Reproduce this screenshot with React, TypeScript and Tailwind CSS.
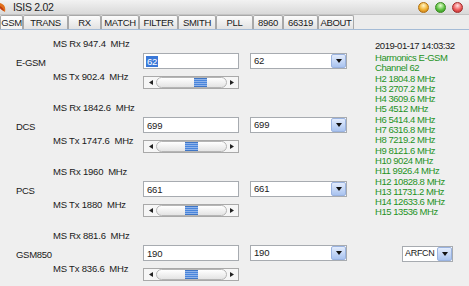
const bands = [
  { name: "E-GSM", rx: "947.4", tx: "902.4", ch: "62", thumb: "ml-[37px]", sel: true },
  { name: "DCS", rx: "1842.6", tx: "1747.6", ch: "699", thumb: "ml-[28px]", sel: false },
  { name: "PCS", rx: "1960", tx: "1880", ch: "661", thumb: "ml-[28px]", sel: false },
  { name: "GSM850", rx: "881.6", tx: "836.6", ch: "190", thumb: "ml-[28px]", sel: false },
]

const tabs = [
  { label: "GSM", w: "w-[23px]" },
  { label: "TRANS", w: "w-[45px]" },
  { label: "RX", w: "w-[33px]" },
  { label: "MATCH", w: "w-[38px]" },
  { label: "FILTER", w: "w-[39px]" },
  { label: "SMITH", w: "w-[38px]" },
  { label: "PLL", w: "w-[37px]" },
  { label: "8960", w: "w-[30px]" },
  { label: "66319", w: "w-[35px]" },
  { label: "ABOUT", w: "w-[36px]" },
]

const harmonics = [
  "H2 1804.8 MHz",
  "H3 2707.2 MHz",
  "H4 3609.6 MHz",
  "H5 4512 MHz",
  "H6 5414.4 MHz",
  "H7 6316.8 MHz",
  "H8 7219.2 MHz",
  "H9 8121.6 MHz",
  "H10 9024 MHz",
  "H11 9926.4 MHz",
  "H12 10828.8 MHz",
  "H13 11731.2 MHz",
  "H14 12633.6 MHz",
  "H15 13536 MHz",
]

function DropButton() {
  return (
    <div className="w-[15px] h-full border border-[#9ab3e0] rounded-[2px] bg-linear-to-b from-[#e3ecfc] to-[#a9c3ef] flex items-center justify-center">
      <svg width="6" height="4" viewBox="0 0 6 4">
        <polygon points="0,0 6,0 3,4" fill="#111" />
      </svg>
    </div>
  )
}

function ScrollBar({ thumb }: { thumb: string }) {
  return (
    <div className="w-[96px] h-[13px] mt-[7px] border border-[#a9a9a9] bg-[#f6f6f6] flex items-center px-[2px]">
      <div className="w-[10px] flex justify-center">
        <svg width="4" height="5" viewBox="0 0 4 5">
          <polygon points="4,0 4,5 0,2.5" fill="#222" />
        </svg>
      </div>
      <div className="flex-1 h-[11px] rounded-full border border-[#b5b5b5] bg-linear-to-b from-white to-[#e4e4e4] flex items-center">
        <div className={`${thumb} w-[13px] h-[9px] bg-[repeating-linear-gradient(180deg,#8fb3ea_0px,#8fb3ea_1px,#4a86dc_1px,#4a86dc_2px)] border-y border-[#3f76c6]`} />
      </div>
      <div className="w-[9px] flex justify-center">
        <svg width="4" height="5" viewBox="0 0 4 5">
          <polygon points="0,0 0,5 4,2.5" fill="#222" />
        </svg>
      </div>
    </div>
  )
}

function BandSection({ band }: { band: (typeof bands)[number] }) {
  return (
    <div className="h-[64px] flex pl-[16px]">
      <div className="w-[37px] pt-[20px] text-[9.5px] tracking-[-0.3px] leading-[14px]">{band.name}</div>
      <div className="w-[90px] flex flex-col text-[9.5px] tracking-[-0.2px] leading-[14px]">
        <div className="mt-[1px] whitespace-pre">{"MS Rx " + band.rx + "  MHz"}</div>
        <div className="mt-[19px] whitespace-pre">{"MS Tx " + band.tx + "  MHz"}</div>
      </div>
      <div className="flex flex-col pt-[17px]">
        <div className="flex">
          <div className="w-[96px] h-[16px] border border-[#a7abb0] bg-white flex items-center pl-[2px] text-[9.5px] tracking-[-0.2px]">
            <span className={band.sel ? "bg-[#3a78d8] text-white leading-[11px] px-[1px]" : "leading-[11px] px-[1px]"}>{band.ch}</span>
          </div>
          <div className="ml-[11px] w-[97px] h-[16px] border border-[#a7abb0] bg-white flex items-center text-[9.5px] tracking-[-0.2px]">
            <span className="flex-1 pl-[3px]">{band.ch}</span>
            <DropButton />
          </div>
        </div>
        <ScrollBar thumb={band.thumb} />
      </div>
    </div>
  )
}

export default function App() {
  return (
    <div className="w-[469px] h-[286px] overflow-hidden bg-[#efefef] text-[#1a1a1a] font-['Liberation_Sans',Arial,sans-serif]">
      <div className="h-[15px] flex items-center bg-linear-to-b from-[#f2f2f2] to-[#d9d9d9] border-b border-[#c4c4c4]">
        <svg width="6" height="11" viewBox="0 0 6 11">
          <path d="M0,1 C4,2 6,5 5,10 C3,9 0,7 0,4 Z" fill="#e0701c" />
          <path d="M0,4 C2,5 4,7 4,9 C2,8 0,7 0,6 Z" fill="#c23a10" />
        </svg>
        <span className="ml-[7px] text-[10.5px] tracking-[-0.3px] leading-[13px] text-[#222]">ISIS 2.02</span>
        <div className="ml-auto mr-[6px] flex gap-[6px]">
          <div className="w-[11px] h-[11px] rounded-full border border-[#b07010] bg-[radial-gradient(circle_at_50%_30%,#fff6c8,#f0b030_55%,#c06a10)]" />
          <div className="w-[11px] h-[11px] rounded-full border border-[#3a8a20] bg-[radial-gradient(circle_at_50%_30%,#e6ffd0,#5cc040_55%,#2e8a1c)]" />
          <div className="w-[11px] h-[11px] rounded-full border border-[#a02a2a] bg-[radial-gradient(circle_at_50%_30%,#ffe0e0,#ee5a5a_55%,#b02424)]" />
        </div>
      </div>
      <div className="h-[15px] flex items-end bg-[#ececec] border-b border-[#a4bbd6]">
        {tabs.map((t, i) => (
          <div
            key={t.label}
            className={`${t.w} h-[14px] flex items-center justify-center text-[9.5px] tracking-[-0.3px] leading-[12px] border border-b-0 border-[#a8a8a8] rounded-t-[2px] ${
              i === 0 ? "bg-linear-to-b from-white to-[#f2f2f2]" : "bg-linear-to-b from-[#fbfbfb] to-[#e2e2e2]"
            }`}
          >
            {t.label}
          </div>
        ))}
      </div>
      <div className="flex">
        <div className="w-[375px] pt-[6px]">
          {bands.map((b) => (
            <BandSection key={b.name} band={b} />
          ))}
        </div>
        <div className="flex flex-col pt-[10px] text-[9.5px] tracking-[-0.45px]">
          <div className="leading-[12px] mb-[1px]">2019-01-17 14:03:32</div>
          <div className="text-[#1f931f] leading-[10.3px]">
            <div>Harmonics E-GSM</div>
            <div>Channel 62</div>
            {harmonics.map((h) => (
              <div key={h}>{h}</div>
            ))}
          </div>
          <div className="mt-[28px] ml-[27px] w-[51px] h-[16px] border border-[#a7abb0] bg-white flex items-center text-[9px] tracking-[-0.3px]">
            <span className="flex-1 pl-[2px]">ARFCN</span>
            <DropButton />
          </div>
        </div>
      </div>
    </div>
  )
}
